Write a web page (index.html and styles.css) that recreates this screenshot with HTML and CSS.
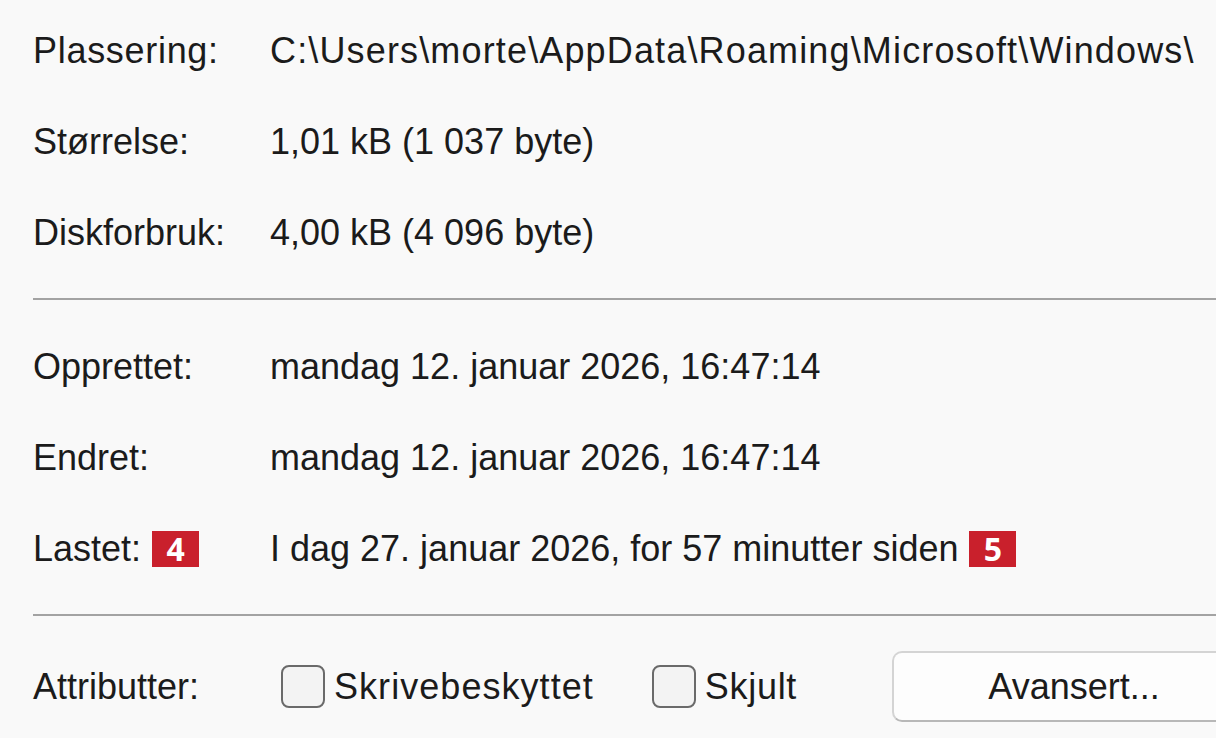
FILE: index.html
```html
<!DOCTYPE html>
<html lang="nb">
<head>
<meta charset="utf-8">
<link rel="stylesheet" href="styles.css">
</head>
<body>
<div class="panel">
  <div class="group">
    <div class="row"><div class="label wide">Plassering:</div><div class="value path">C:\Users\morte\AppData\Roaming\Microsoft\Windows\</div></div>
    <div class="row"><div class="label">Størrelse:</div><div class="value">1,01 kB (1 037 byte)</div></div>
    <div class="row"><div class="label">Diskforbruk:</div><div class="value">4,00 kB (4 096 byte)</div></div>
  </div>
  <div class="sep"></div>
  <div class="group">
    <div class="row"><div class="label">Opprettet:</div><div class="value">mandag 12. januar 2026, 16:47:14</div></div>
    <div class="row"><div class="label">Endret:</div><div class="value">mandag 12. januar 2026, 16:47:14</div></div>
    <div class="row"><div class="label">Lastet: <span class="badge">4</span></div><div class="value">I dag 27. januar 2026, for 57 minutter siden <span class="badge">5</span></div></div>
  </div>
  <div class="sep"></div>
  <div class="attrs">
    <div class="label">Attributter:</div>
    <div class="checks">
      <label class="check first"><span class="box"></span><span class="ctext">Skrivebeskyttet</span></label>
      <label class="check second"><span class="box"></span><span class="ctext">Skjult</span></label>
      <button class="btn">Avansert...</button>
    </div>
  </div>
</div>
</body>
</html>
```
FILE: styles.css
```css
html, body {
  margin: 0;
  padding: 0;
  background: #f9f9f9;
}
body {
  width: 1216px;
  height: 738px;
  overflow: hidden;
  font-family: "Liberation Sans", Arial, sans-serif;
  font-size: 36px;
  color: #1b1b1b;
}
.panel {
  padding: 5px 0 0 33px;
}
.row {
  display: grid;
  grid-template-columns: 237px auto;
  height: 91px;
  align-items: center;
  white-space: nowrap;
}
.label, .value {
  display: flex;
  align-items: center;
  white-space: nowrap;
}
.wide {
  letter-spacing: 0.7px;
}
.path {
  letter-spacing: 1.15px;
}
.badge {
  display: inline-flex;
  align-items: center;
  justify-content: center;
  width: 47px;
  height: 36px;
  margin-left: 11px;
  background: #c9202c;
  color: #fff;
  font-family: "Open Sans", "Liberation Sans", sans-serif;
  font-weight: 700;
  font-size: 32px;
  letter-spacing: 0;
}
.sep {
  height: 2px;
  background: #a3a3a3;
  margin: 20px 0 21px 0;
}
.attrs {
  display: grid;
  grid-template-columns: 248px auto;
  align-items: center;
  margin-top: 35px;
  height: 70px;
}
.checks {
  display: flex;
  align-items: center;
}
.check {
  display: flex;
  align-items: center;
}
.first {
  margin-right: 58px;
}
.first .ctext {
  letter-spacing: 1.05px;
}
.second {
  margin-right: 95px;
}
.second .ctext {
  letter-spacing: 0.7px;
}
.box {
  width: 40px;
  height: 39px;
  border: 2px solid #6a6a6a;
  border-radius: 8px;
  background: #f3f3f3;
  margin-right: 9px;
}
.btn {
  width: 364px;
  height: 71px;
  flex: none;
  background: #fdfdfd;
  border: 2px solid #d4d4d4;
  border-bottom-color: #b8b8b8;
  border-radius: 10px;
  font-family: inherit;
  font-size: 36px;
  color: #1b1b1b;
  padding: 0;
}
```
